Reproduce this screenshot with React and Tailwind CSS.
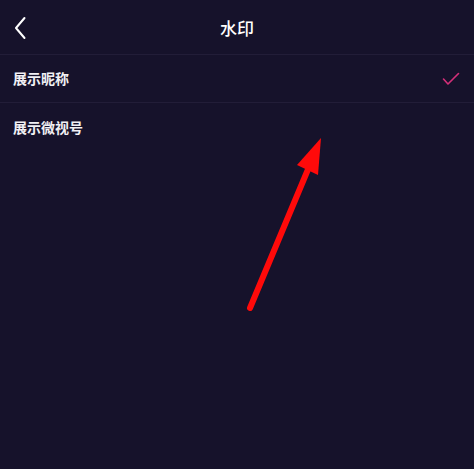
import React from 'react';

export default function App() {
  return (
    <div
      className="relative w-[474px] h-[469px] bg-[#16122b] text-white overflow-hidden"
      style={{ fontFamily: '"Noto Sans CJK SC", "Noto Sans", sans-serif' }}
    >
      {/* Header */}
      <header className="relative h-[55px] flex items-center justify-center border-b border-[#221d38]">
        <button className="absolute left-[12px] top-[16px] w-[16px] h-[24px] flex items-center justify-center">
          <svg width="14" height="24" viewBox="0 0 14 24" fill="none">
            <path d="M11.5 2L3 12l8.5 10" stroke="#ffffff" strokeWidth="2" strokeLinecap="round" strokeLinejoin="round" />
          </svg>
        </button>
        <h1 className="text-[17px] font-medium leading-none mt-[1px]">水印</h1>
      </header>

      {/* Options */}
      <ul>
        <li className="h-[48px] flex items-center justify-between pl-[13px] pr-[14px] border-b border-[#221d38]">
          <span className="text-[14px] font-semibold text-[#f1f0f4]">展示昵称</span>
          <svg width="18" height="14" viewBox="0 0 18 14" fill="none">
            <path d="M1.5 7l4.5 5L16.5 1.5" stroke="#d42f79" strokeWidth="1.6" strokeLinecap="round" strokeLinejoin="round" />
          </svg>
        </li>
        <li className="h-[48px] flex items-center pl-[13px]">
          <span className="text-[14px] font-semibold text-[#f1f0f4]">展示微视号</span>
        </li>
      </ul>

      {/* Annotation arrow */}
      <svg className="absolute left-0 top-0 pointer-events-none" width="474" height="469" viewBox="0 0 474 469">
        <line x1="250" y1="308" x2="309" y2="167" stroke="#ff0a0a" strokeWidth="6" strokeLinecap="round" />
        <polygon points="321,138 297,165 318,175" fill="#ff0a0a" />
      </svg>
    </div>
  );
}
